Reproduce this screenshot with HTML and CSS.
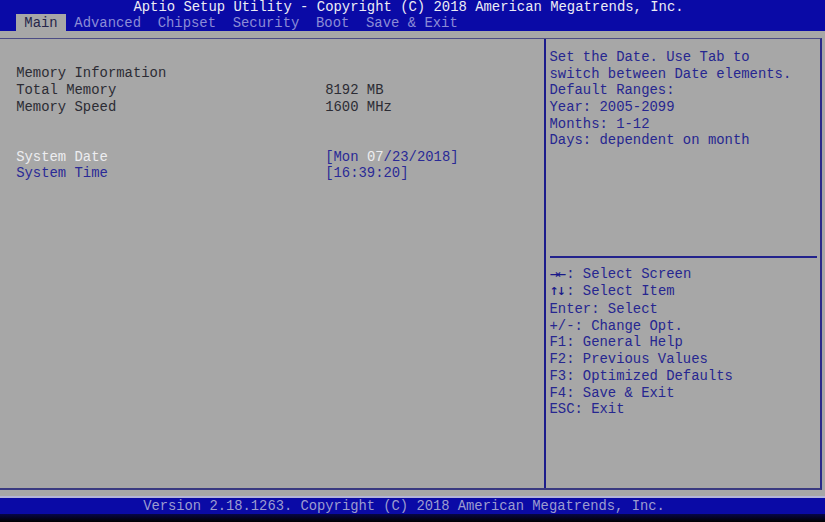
FILE: index.html
```html
<!DOCTYPE html>
<html lang="en">
<head>
    <meta charset="UTF-8">
    <meta name="viewport" content="width=device-width, initial-scale=1.0">
    <title>Aptio Setup Utility</title>
    <link rel="stylesheet" href="styles.css">
</head>
<body>

    <!-- Title + tabs -->
    <div class="topbar">
        <div class="title">Aptio Setup Utility - Copyright (C) 2018 American Megatrends, Inc.</div>
        <div class="tabs">
            <span class="tab active">Main</span>
            <span class="tab">Advanced</span>
            <span class="tab">Chipset</span>
            <span class="tab">Security</span>
            <span class="tab">Boot</span>
            <span class="tab">Save &amp; Exit</span>
        </div>
    </div>

    <div class="screen">
        <div class="frame">
            <!-- Settings list -->
            <div class="settings">
                <div class="row"></div>
                <div class="row"><span class="label">Memory Information</span></div>
                <div class="row"><span class="label">Total Memory</span><span class="value">8192 MB</span></div>
                <div class="row"><span class="label">Memory Speed</span><span class="value">1600 MHz</span></div>
                <div class="row"></div>
                <div class="row"></div>
                <div class="row item selected"><span class="label">System Date</span><span class="value">[Mon <b class="cursor">07</b>/23/2018]</span></div>
                <div class="row item"><span class="label">System Time</span><span class="value">[16:39:20]</span></div>
            </div>

            <!-- Help panel -->
            <div class="help">
                <div class="help-text">
                    <div>Set the Date. Use Tab to</div>
                    <div>switch between Date elements.</div>
                    <div>Default Ranges:</div>
                    <div>Year: 2005-2099</div>
                    <div>Months: 1-12</div>
                    <div>Days: dependent on month</div>
                </div>
                <div class="keys">
                    <div><b class="arrows">→←</b>: Select Screen</div>
                    <div><b class="arrows">↑↓</b>: Select Item</div>
                    <div>Enter: Select</div>
                    <div>+/-: Change Opt.</div>
                    <div>F1: General Help</div>
                    <div>F2: Previous Values</div>
                    <div>F3: Optimized Defaults</div>
                    <div>F4: Save &amp; Exit</div>
                    <div>ESC: Exit</div>
                </div>
            </div>
        </div>
    </div>

    <div class="footer">Version 2.18.1263. Copyright (C) 2018 American Megatrends, Inc.</div>
    <div class="bottom"></div>

</body>
</html>
```

FILE: styles.css
```css
* {
    margin: 0;
    padding: 0;
    box-sizing: border-box;
}

body {
    width: 825px;
    height: 522px;
    overflow: hidden;
    background: #000;
    font-family: "Liberation Mono", "DejaVu Sans Mono", monospace;
    font-size: 13.9px;
    white-space: nowrap;
}

/* Title bar */
.topbar {
    height: 31px;
    background: #0a0aa6;
}

.title {
    height: 14px;
    padding-right: 8px;
    line-height: 14px;
    text-align: center;
    color: #ececf4;
}

.tabs {
    display: flex;
    height: 17px;
    padding-left: 16px;
    line-height: 18px;
}

.tab {
    padding: 0 8.33px;
    color: #8c8cd6;
}

.tab.active {
    background: #a7a7a7;
    color: #26264a;
}

/* Main area */
.screen {
    height: 466px;
    background: #a7a7a7;
    padding-top: 7px;
}

.frame {
    display: flex;
    height: 452px;
    margin-right: 3px;
    border-top: 1px solid #4c4c84;
    border-right: 2px solid #2a2a8a;
    border-bottom: 2px solid #3a3a80;
}

.settings {
    width: 546px;
    padding-top: 9.6px;
    border-right: 2px solid #1c1c8c;
}

.row {
    display: flex;
    height: 16.7px;
    line-height: 16.7px;
    padding-left: 16.2px;
    color: #2c2c34;
}

.label {
    width: 309px;
}

.item {
    color: #2a2a96;
}

.item.selected .label {
    color: #ededf0;
}

.cursor {
    font-weight: normal;
    color: #ededf0;
}

/* Help panel */
.help {
    flex: 1;
    padding-left: 3.5px;
    color: #262690;
    line-height: 16.7px;
}

.help-text {
    height: 219px;
    padding-top: 9.8px;
    margin-right: 3px;
    border-bottom: 2px solid #22228c;
}

.keys {
    padding-top: 7.6px;
}

.arrows {
    font-family: "DejaVu Sans", sans-serif;
    font-size: 11px;
    color: #1a1a8a;
    letter-spacing: -2px;
    display: inline-block;
    width: 16.7px;
}

/* Footer */
.footer {
    height: 18px;
    margin-top: -1px;
    padding-right: 17px;
    border-top: 2px solid #b4b4d8;
    background: #0a0aa6;
    color: #9c9cd0;
    text-align: center;
    line-height: 17px;
    font-size: 13.8px;
}

.bottom {
    height: 8px;
    background: linear-gradient(#06064a, #000);
}
```
